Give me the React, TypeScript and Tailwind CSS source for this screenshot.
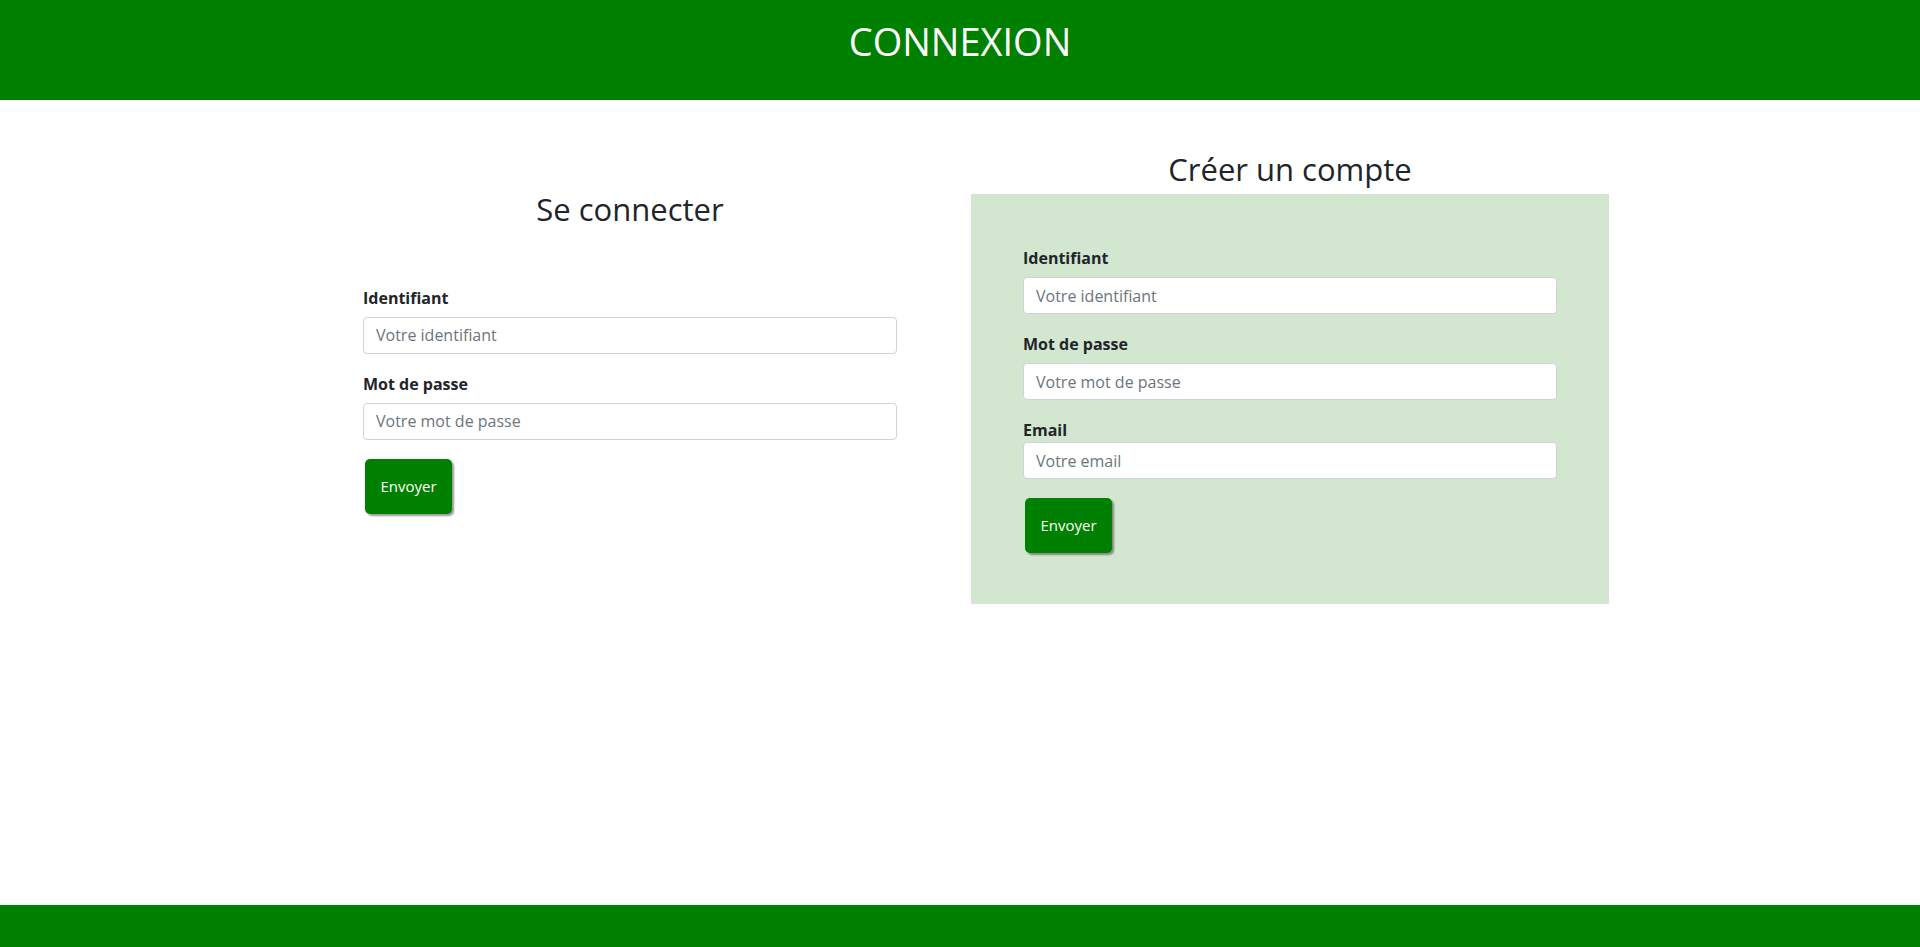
import { useState } from 'react';

const font = { fontFamily: '"Open Sans", "Noto Sans", Arial, sans-serif' };

function Field({ label, placeholder, type = 'text', gap = true }: { label: string; placeholder: string; type?: string; gap?: boolean }) {
    const [value, setValue] = useState('');
    return (
        <div className="mb-[18px]">
            <label className={`block text-[16px] leading-6 font-bold text-[#212529] ${gap ? 'mb-[7px]' : ''}`}>{label}</label>
            <input
                type={type}
                value={value}
                onChange={e => setValue(e.target.value)}
                placeholder={placeholder}
                className="block w-full h-[37px] px-3 text-[16px] text-[#212529] bg-white border border-[#ced4da] rounded-[4px] placeholder:text-[#6c757d] outline-none"
            />
        </div>
    );
}

function SubmitButton() {
    return (
        <button
            type="submit"
            className="mt-[1px] w-[87px] h-[55px] ml-[2px] rounded-[5px] bg-[#008000] text-white text-[15px] shadow-[2px_2px_2px_rgba(0,0,0,0.4)]"
        >
            Envoyer
        </button>
    );
}

export default function App() {
    return (
        <div className="min-h-[947px] flex flex-col bg-white text-[#212529]" style={font}>
            {/* Header */}
            <header className="h-[100px] bg-[#008000] pt-[17px] text-center">
                <h1 className="text-[38px] leading-[48px] text-white">CONNEXION</h1>
            </header>

            <main className="flex-1 pt-[50px]">
                <div className="w-[1298px] mx-auto grid grid-cols-2 gap-[22px] items-center">
                    {/* Login */}
                    <section>
                        <h2 className="text-[31px] leading-[38px] text-center mb-[6px]">Se connecter</h2>
                        <form className="px-[52px] pt-[52px] pb-[51px]" onSubmit={e => e.preventDefault()}>
                            <Field label="Identifiant" placeholder="Votre identifiant" />
                            <Field label="Mot de passe" placeholder="Votre mot de passe" type="password" />
                            <SubmitButton />
                        </form>
                    </section>

                    {/* Register */}
                    <section>
                        <h2 className="text-[31px] leading-[38px] text-center mb-[6px]">Créer un compte</h2>
                        <form className="bg-[#d3e6cf] px-[52px] pt-[52px] pb-[51px]" onSubmit={e => e.preventDefault()}>
                            <Field label="Identifiant" placeholder="Votre identifiant" />
                            <Field label="Mot de passe" placeholder="Votre mot de passe" type="password" />
                            <Field label="Email" placeholder="Votre email" type="email" gap={false} />
                            <SubmitButton />
                        </form>
                    </section>
                </div>
            </main>

            {/* Footer */}
            <footer className="h-[42px] bg-[#008000]" />
        </div>
    );
}
